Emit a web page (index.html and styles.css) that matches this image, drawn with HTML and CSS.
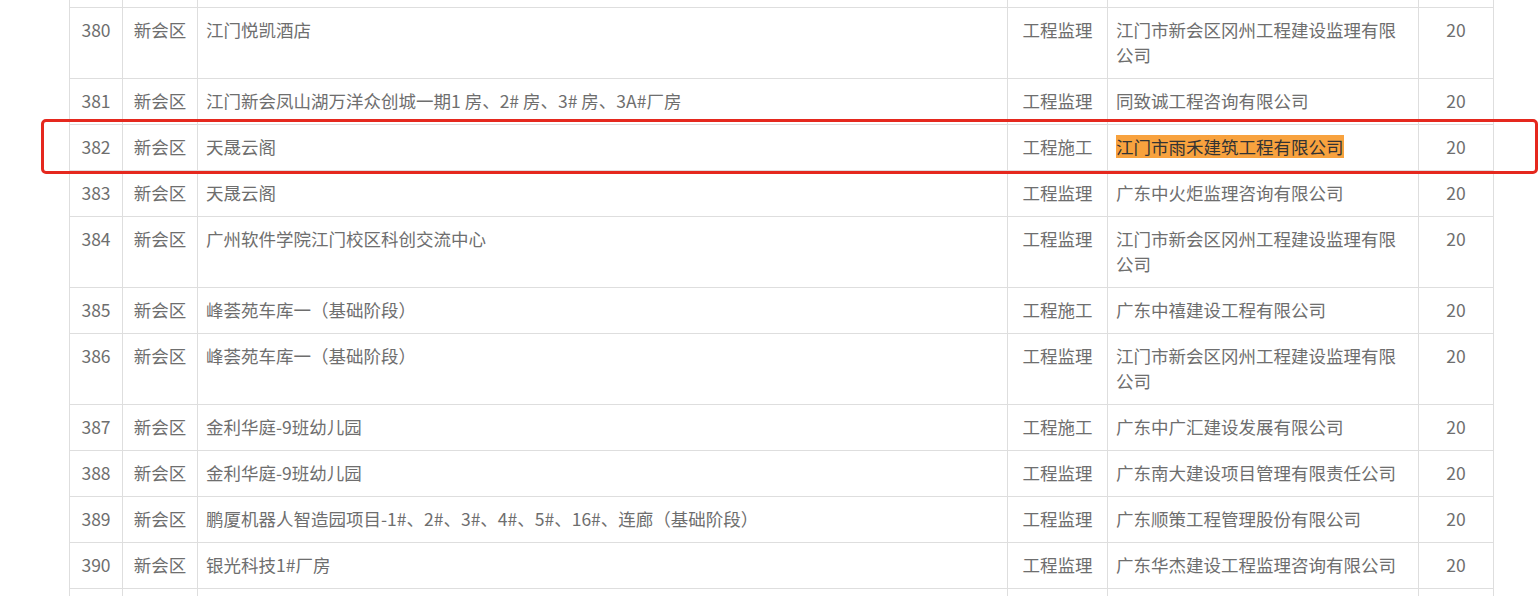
FILE: index.html
```html
<!DOCTYPE html>
<html lang="zh-CN">
<head>
    <meta charset="UTF-8">
    <meta name="viewport" content="width=device-width, initial-scale=1.0">
    <title>项目名单</title>
    <link rel="stylesheet" href="styles.css">
</head>
<body>
    <table class="list">
        <colgroup>
            <col class="c-no">
            <col class="c-area">
            <col class="c-name">
            <col class="c-type">
            <col class="c-company">
            <col class="c-score">
        </colgroup>
        <tbody>
            <tr class="cut-top">
                <td></td><td></td><td></td><td></td><td></td><td></td>
            </tr>
            <tr>
                <td class="center">380</td>
                <td class="center">新会区</td>
                <td>江门悦凯酒店</td>
                <td class="center">工程监理</td>
                <td>江门市新会区冈州工程建设监理有限公司</td>
                <td class="center">20</td>
            </tr>
            <tr>
                <td class="center">381</td>
                <td class="center">新会区</td>
                <td>江门新会凤山湖万洋众创城一期1 房、2# 房、3# 房、3A#厂房</td>
                <td class="center">工程监理</td>
                <td>同致诚工程咨询有限公司</td>
                <td class="center">20</td>
            </tr>
            <tr>
                <td class="center">382</td>
                <td class="center">新会区</td>
                <td>天晟云阁</td>
                <td class="center">工程施工</td>
                <td><span class="mark">江门市雨禾建筑工程有限公司</span></td>
                <td class="center">20</td>
            </tr>
            <tr>
                <td class="center">383</td>
                <td class="center">新会区</td>
                <td>天晟云阁</td>
                <td class="center">工程监理</td>
                <td>广东中火炬监理咨询有限公司</td>
                <td class="center">20</td>
            </tr>
            <tr>
                <td class="center">384</td>
                <td class="center">新会区</td>
                <td>广州软件学院江门校区科创交流中心</td>
                <td class="center">工程监理</td>
                <td>江门市新会区冈州工程建设监理有限公司</td>
                <td class="center">20</td>
            </tr>
            <tr>
                <td class="center">385</td>
                <td class="center">新会区</td>
                <td>峰荟苑车库一（基础阶段）</td>
                <td class="center">工程施工</td>
                <td>广东中禧建设工程有限公司</td>
                <td class="center">20</td>
            </tr>
            <tr>
                <td class="center">386</td>
                <td class="center">新会区</td>
                <td>峰荟苑车库一（基础阶段）</td>
                <td class="center">工程监理</td>
                <td>江门市新会区冈州工程建设监理有限公司</td>
                <td class="center">20</td>
            </tr>
            <tr>
                <td class="center">387</td>
                <td class="center">新会区</td>
                <td>金利华庭-9班幼儿园</td>
                <td class="center">工程施工</td>
                <td>广东中广汇建设发展有限公司</td>
                <td class="center">20</td>
            </tr>
            <tr>
                <td class="center">388</td>
                <td class="center">新会区</td>
                <td>金利华庭-9班幼儿园</td>
                <td class="center">工程监理</td>
                <td>广东南大建设项目管理有限责任公司</td>
                <td class="center">20</td>
            </tr>
            <tr>
                <td class="center">389</td>
                <td class="center">新会区</td>
                <td>鹏厦机器人智造园项目-1#、2#、3#、4#、5#、16#、连廊（基础阶段）</td>
                <td class="center">工程监理</td>
                <td>广东顺策工程管理股份有限公司</td>
                <td class="center">20</td>
            </tr>
            <tr>
                <td class="center">390</td>
                <td class="center">新会区</td>
                <td>银光科技1#厂房</td>
                <td class="center">工程监理</td>
                <td>广东华杰建设工程监理咨询有限公司</td>
                <td class="center">20</td>
            </tr>
            <tr>
                <td></td><td></td><td></td><td></td><td></td><td></td>
            </tr>
        </tbody>
    </table>

    <div class="focus-box"></div>
</body>
</html>
```

FILE: styles.css
```css
* {
    margin: 0;
    padding: 0;
    box-sizing: border-box;
}

body {
    width: 100vw;
    height: 100vh;
    overflow: hidden;
    background: #fff;
    position: relative;
    font-family: "Noto Sans CJK SC", "Noto Sans", sans-serif;
}

.list {
    margin-left: 69px;
    width: 1425px;
    table-layout: fixed;
    border-collapse: collapse;
    font-size: 17.5px;
    line-height: 25px;
    color: #6e6e6e;
}

.c-no { width: 53px; }
.c-area { width: 75px; }
.c-name { width: 810px; }
.c-type { width: 100px; }
.c-company { width: 311px; }
.c-score { width: 75px; }

.list td {
    border: 1px solid #dedede;
    padding: 9px 8px 11px;
    vertical-align: top;
    text-align: left;
}

.list td.center {
    text-align: center;
    padding-left: 4px;
    padding-right: 4px;
}

/* row cut off by the top of the window */
.cut-top td {
    border-top: none;
    padding: 0;
    height: 7px;
}

.mark {
    display: inline-block;
    vertical-align: top;
    line-height: 23px;
    margin-top: 1px;
    background: #f8a23e;
    color: #333;
}

/* red frame drawn over row 382 */
.focus-box {
    position: absolute;
    left: 41px;
    top: 119px;
    width: 1497px;
    height: 55px;
    border: 3px solid #e5281e;
    border-radius: 5px;
    pointer-events: none;
}
```
